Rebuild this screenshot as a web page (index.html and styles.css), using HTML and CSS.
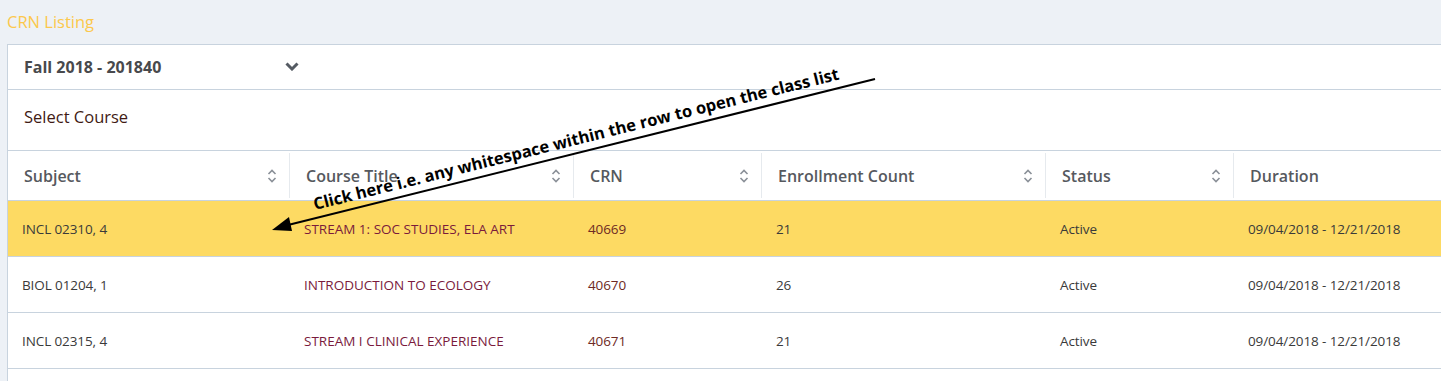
FILE: index.html
```html
<!DOCTYPE html>
<html>
<head>
<meta charset="utf-8">
<link rel="stylesheet" href="styles.css">
</head>
<body>
<div class="page">
  <div class="title">CRN Listing</div>
  <div class="panel">
    <div class="term-row">
      <span class="term">Fall 2018 - 201840</span>
      <svg class="chev" width="14" height="9" viewBox="0 0 14 9"><path d="M1.5 1.5 L7 7 L12.5 1.5" fill="none" stroke="#555b63" stroke-width="3"/></svg>
    </div>
    <div class="select-row">Select Course</div>
    <div class="grid head">
      <div class="hcell"><span>Subject</span><svg class="sort" width="10" height="16" viewBox="0 0 10 16"><path d="M1.5 6 L5 2.5 L8.5 6 M1.5 10 L5 13.5 L8.5 10" fill="none" stroke="#8a9098" stroke-width="1.6"/></svg></div>
      <div class="hcell"><span>Course Title</span><svg class="sort" width="10" height="16" viewBox="0 0 10 16"><path d="M1.5 6 L5 2.5 L8.5 6 M1.5 10 L5 13.5 L8.5 10" fill="none" stroke="#8a9098" stroke-width="1.6"/></svg></div>
      <div class="hcell"><span>CRN</span><svg class="sort" width="10" height="16" viewBox="0 0 10 16"><path d="M1.5 6 L5 2.5 L8.5 6 M1.5 10 L5 13.5 L8.5 10" fill="none" stroke="#8a9098" stroke-width="1.6"/></svg></div>
      <div class="hcell"><span>Enrollment Count</span><svg class="sort" width="10" height="16" viewBox="0 0 10 16"><path d="M1.5 6 L5 2.5 L8.5 6 M1.5 10 L5 13.5 L8.5 10" fill="none" stroke="#8a9098" stroke-width="1.6"/></svg></div>
      <div class="hcell"><span>Status</span><svg class="sort" width="10" height="16" viewBox="0 0 10 16"><path d="M1.5 6 L5 2.5 L8.5 6 M1.5 10 L5 13.5 L8.5 10" fill="none" stroke="#8a9098" stroke-width="1.6"/></svg></div>
      <div class="hcell last"><span>Duration</span></div>
    </div>
    <div class="grid row selected">
      <div class="cell">INCL 02310, 4</div>
      <div class="cell title-c">STREAM 1: SOC STUDIES, ELA ART</div>
      <div class="cell crn">40669</div>
      <div class="cell">21</div>
      <div class="cell">Active</div>
      <div class="cell">09/04/2018 - 12/21/2018</div>
    </div>
    <div class="grid row">
      <div class="cell">BIOL 01204, 1</div>
      <div class="cell title-c">INTRODUCTION TO ECOLOGY</div>
      <div class="cell crn">40670</div>
      <div class="cell">26</div>
      <div class="cell">Active</div>
      <div class="cell">09/04/2018 - 12/21/2018</div>
    </div>
    <div class="grid row">
      <div class="cell">INCL 02315, 4</div>
      <div class="cell title-c">STREAM I CLINICAL EXPERIENCE</div>
      <div class="cell crn">40671</div>
      <div class="cell">21</div>
      <div class="cell">Active</div>
      <div class="cell">09/04/2018 - 12/21/2018</div>
    </div>
    <div class="filler"></div>
  </div>
  <svg class="arrow" width="1441" height="381" viewBox="0 0 1441 381">
    <line x1="875" y1="79" x2="284" y2="226" stroke="#000" stroke-width="2"/>
    <polygon points="272,230 289,217 292,231" fill="#000"/>
  </svg>
  <div class="note">Click here i.e. any whitespace within the row to open the class list</div>
</div>
</body>
</html>
```

FILE: styles.css
```css
html, body {
  margin: 0;
  padding: 0;
}
body {
  background: #edf1f6;
  font-family: "Open Sans", "Liberation Sans", sans-serif;
  width: 1441px;
  height: 381px;
  overflow: hidden;
}
.page {
  position: relative;
  width: 1441px;
  height: 381px;
}
.title {
  height: 44px;
  box-sizing: border-box;
  padding: 11px 0 0 7px;
  font-size: 16.5px;
  line-height: 22px;
  color: #fcc84c;
}
.panel {
  margin-left: 7px;
  background: #fff;
  border-left: 1px solid #c8d3de;
  border-top: 1px solid #c8d3de;
  height: 337px;
}
.term-row {
  height: 44px;
  border-bottom: 1px solid #c8d3de;
  display: flex;
  align-items: center;
  padding-left: 16px;
}
.term {
  font-weight: 700;
  font-size: 16px;
  color: #48494c;
  width: 261px;
}
.chev {
  display: block;
  margin-top: -1px;
}
.select-row {
  height: 61px;
  box-sizing: border-box;
  padding-bottom: 7px;
  border-bottom: 1px solid #c8d3de;
  display: flex;
  align-items: center;
  padding-left: 16px;
  font-size: 16.5px;
  color: #3f1a14;
}
.grid {
  display: grid;
  grid-template-columns: 282px 284px 188px 284px 188px 1fr;
}
.head {
  height: 49px;
  border-bottom: 1px solid #c8d3de;
}
.hcell {
  display: flex;
  align-items: center;
  justify-content: space-between;
  padding: 0 12px 0 16px;
  font-size: 16px;
  font-weight: 600;
  color: #56595e;
  border-right: 1px solid #e6eaee;
  margin: 2px 0;
}
.hcell.last {
  border-right: none;
}
.sort {
  display: block;
}
.row {
  height: 55px;
  border-bottom: 1px solid #c8d3de;
}
.row.selected {
  background: #fdda63;
}
.cell {
  display: flex;
  align-items: center;
  padding-left: 14px;
  font-size: 13.5px;
  letter-spacing: -0.1px;
  color: #3a3a3a;
  white-space: nowrap;
}
.cell.title-c {
  color: #7a1a3c;
  letter-spacing: 0;
}
.cell.crn {
  color: #6e2a24;
}
.arrow {
  position: absolute;
  left: 0;
  top: 0;
  pointer-events: none;
}
.note {
  position: absolute;
  left: 316px;
  top: 194px;
  font-size: 16.5px;
  font-weight: 700;
  line-height: 20px;
  color: #000;
  white-space: nowrap;
  transform-origin: 0 100%;
  transform: rotate(-14deg);
}
```
